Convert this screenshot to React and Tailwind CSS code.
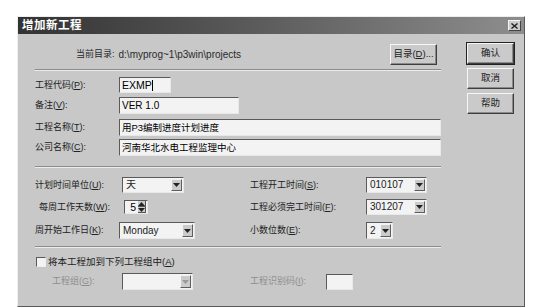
import React from 'react';

const font = { fontFamily: '"Liberation Sans", "Noto Sans CJK SC", sans-serif' };

/* mnemonic label like 工程代码(P): */
const Lbl = ({ text, k, tail = ':', gray, className = '' }) => (
  <span className={`text-[9px] leading-none whitespace-nowrap ${gray ? 'text-[#8e8e8e]' : 'text-[#222]'} ${className}`}>
    {text}(<span className="underline">{k}</span>){tail}
  </span>
);

const Sunken = ({ className = '', children }) => (
  <div className={`border-t border-l border-t-[#5a5a5a] border-l-[#5a5a5a] border-b border-r border-b-[#e8e8e8] border-r-[#e8e8e8] bg-[#f3f3f3] flex items-center ${className}`}>
    {children}
  </div>
);

const Arrow = ({ up, gray }) => (
  <svg width="7" height="4" viewBox="0 0 7 4">
    <path d={up ? 'M0 4h7L3.5 0z' : 'M0 0h7L3.5 4z'} fill={gray ? '#9a9a9a' : '#222'} />
  </svg>
);

const DropBtn = ({ gray }) => (
  <div className="ml-auto mr-[1px] w-[11px] h-[calc(100%-2px)] bg-[#cbcbcb] border-t border-l border-[#f4f4f4] border-b border-r border-b-[#5e5e5e] border-r-[#5e5e5e] flex items-center justify-center">
    <Arrow gray={gray} />
  </div>
);

const Combo = ({ value, className = '', gray }) => (
  <Sunken className={`${className} ${gray ? 'bg-[#dedede]' : ''}`}>
    <span className="pl-[3px] text-[10px] text-[#222] leading-none">{value}</span>
    <DropBtn gray={gray} />
  </Sunken>
);

const Btn = ({ children, className = '', bold }) => (
  <div className={`flex items-center justify-center whitespace-nowrap bg-[#cacaca] border-t border-l border-[#f6f6f6] border-b border-r border-b-[#3e3e3e] border-r-[#3e3e3e] shadow-[inset_-1px_-1px_0_#8a8a8a] text-[9.5px] text-[#222] ${bold ? 'outline outline-1 outline-[#222]' : ''} ${className}`}>
    {children}
  </div>
);

const Sep = ({ className = '' }) => (
  <div className={`h-[2px] border-t border-t-[#8c8c8c] border-b border-b-[#ececec] ${className}`} />
);

export default function App() {
  return (
    <div className="w-[541px] h-[308px] bg-white pt-[16px] pl-[17px] overflow-hidden" style={font}>
      <div className="w-[508px] h-[291px] bg-[#c8c8c8] border-t border-l border-[#ededed] border-b border-r border-b-[#5a5a5a] border-r-[#5a5a5a] flex flex-col">
        {/* title bar */}
        <div className="h-[17px] flex items-center bg-gradient-to-r from-[#333333] via-[#5e5e5e] to-[#8e8e8e]">
          <span className="pl-[4px] text-[11.5px] font-bold text-white leading-none tracking-[0.5px]">增加新工程</span>
          <div className="ml-auto mr-[3px] w-[13px] h-[11px] bg-[#cbcbcb] border-t border-l border-[#f4f4f4] border-b border-r border-b-[#444] border-r-[#444] flex items-center justify-center">
            <svg width="7" height="6" viewBox="0 0 7 6">
              <path d="M0.5 0.5L6.5 5.5M6.5 0.5L0.5 5.5" stroke="#222" strokeWidth="1.4" />
            </svg>
          </div>
        </div>

        {/* body */}
        <div className="flex pt-[10px]">
          {/* left column */}
          <div className="ml-[17px] w-[406px] flex flex-col">
            <div className="h-[21px] flex items-center pr-[4px]">
              <span className="ml-[41px] text-[9px] text-[#2a2a2a] whitespace-nowrap">当前目录:</span>
              <span className="ml-[4px] text-[10px] text-[#2a2a2a] whitespace-nowrap">d:\myprog~1\p3win\projects</span>
              <Btn className="ml-auto w-[47px] h-[21px]">
                目录(<span className="underline">D</span>)...
              </Btn>
            </div>
            <Sep className="mt-[4px]" />

            <div className="mt-[6px] h-[16px] flex items-center">
              <Lbl text="工程代码" k="P" className="w-[84px]" />
              <Sunken className="w-[52px] h-[16px]">
                <span className="pl-[2px] text-[10.5px] leading-none">EXMP</span>
                <span className="w-px h-[11px] bg-black" />
              </Sunken>
            </div>
            <div className="mt-[4px] h-[17px] flex items-center">
              <Lbl text="备注" k="V" className="w-[84px]" />
              <Sunken className="w-[120px] h-[17px]">
                <span className="pl-[2px] text-[10px] leading-none">VER 1.0</span>
              </Sunken>
            </div>
            <div className="mt-[5px] h-[17px] flex items-center">
              <Lbl text="工程名称" k="T" className="w-[84px]" />
              <Sunken className="w-[322px] h-[17px]">
                <span className="pl-[2px] text-[9.5px] leading-none">用P3编制进度计划进度</span>
              </Sunken>
            </div>
            <div className="mt-[3px] h-[17px] flex items-center">
              <Lbl text="公司名称" k="C" className="w-[84px]" />
              <Sunken className="w-[322px] h-[17px]">
                <span className="pl-[2px] text-[9.5px] leading-none">河南华北水电工程监理中心</span>
              </Sunken>
            </div>
            <Sep className="mt-[10px]" />

            <div className="mt-[9px] h-[16px] flex items-center">
              <div className="w-[215px] flex items-center">
                <Lbl text="计划时间单位" k="U" className="w-[87px]" />
                <Combo value="天" className="w-[62px] h-[16px]" />
              </div>
              <Lbl text="工程开工时间" k="S" className="w-[116px]" />
              <Combo value="010107" className="w-[61px] h-[16px]" />
            </div>
            <div className="mt-[6px] h-[16px] flex items-center">
              <div className="w-[215px] flex items-center">
                <Lbl text="每周工作天数" k="W" className="ml-[4px] w-[85px]" />
                <Sunken className="w-[24px] h-[14px]">
                  <span className="ml-auto text-[10.5px] leading-none">5</span>
                  <div className="ml-[2px] mr-[1px] w-[8px] flex flex-col">
                    <div className="h-[6px] bg-[#cbcbcb] border-b border-r border-[#555] flex items-center justify-center"><Arrow up /></div>
                    <div className="h-[6px] bg-[#cbcbcb] border-b border-r border-[#555] flex items-center justify-center"><Arrow /></div>
                  </div>
                </Sunken>
              </div>
              <Lbl text="工程必须完工时间" k="F" className="w-[116px]" />
              <Combo value="301207" className="w-[61px] h-[16px]" />
            </div>
            <div className="mt-[7px] h-[17px] flex items-center">
              <div className="w-[215px] flex items-center">
                <Lbl text="周开始工作日" k="K" className="w-[84px]" />
                <Combo value="Monday" className="w-[76px] h-[17px]" />
              </div>
              <Lbl text="小数位数" k="E" className="w-[116px]" />
              <Combo value="2" className="w-[27px] h-[17px]" />
            </div>
            <Sep className="mt-[7px]" />

            <div className="mt-[8px] h-[11px] flex items-center">
              <div className="ml-[1px] w-[10px] h-[10px] bg-[#f3f3f3] border-t border-l border-[#5a5a5a] border-b border-r border-b-[#eee] border-r-[#eee]" />
              <span className="ml-[2px] text-[9.5px] leading-none text-[#1e1e1e] whitespace-nowrap">
                将本工程加到下列工程组中(<span className="underline">A</span>)
              </span>
            </div>
            <div className="mt-[6px] h-[17px] flex items-center">
              <div className="w-[215px] flex items-center">
                <Lbl text="工程组" k="G" gray className="ml-[17px] w-[70px]" />
                <Combo value="" gray className="w-[71px] h-[17px]" />
              </div>
              <Lbl text="工程识别码" k="I" gray className="w-[76px]" />
              <Sunken className="w-[27px] h-[16px]" />
            </div>
          </div>

          {/* right buttons */}
          <div className="ml-[26px] w-[47px] flex flex-col">
            <Btn bold className="h-[21px] mt-[-1px]">确认</Btn>
            <Btn className="h-[21px] mt-[4px]">取消</Btn>
            <Btn className="h-[21px] mt-[4px]">帮助</Btn>
          </div>
        </div>
      </div>
    </div>
  );
}
